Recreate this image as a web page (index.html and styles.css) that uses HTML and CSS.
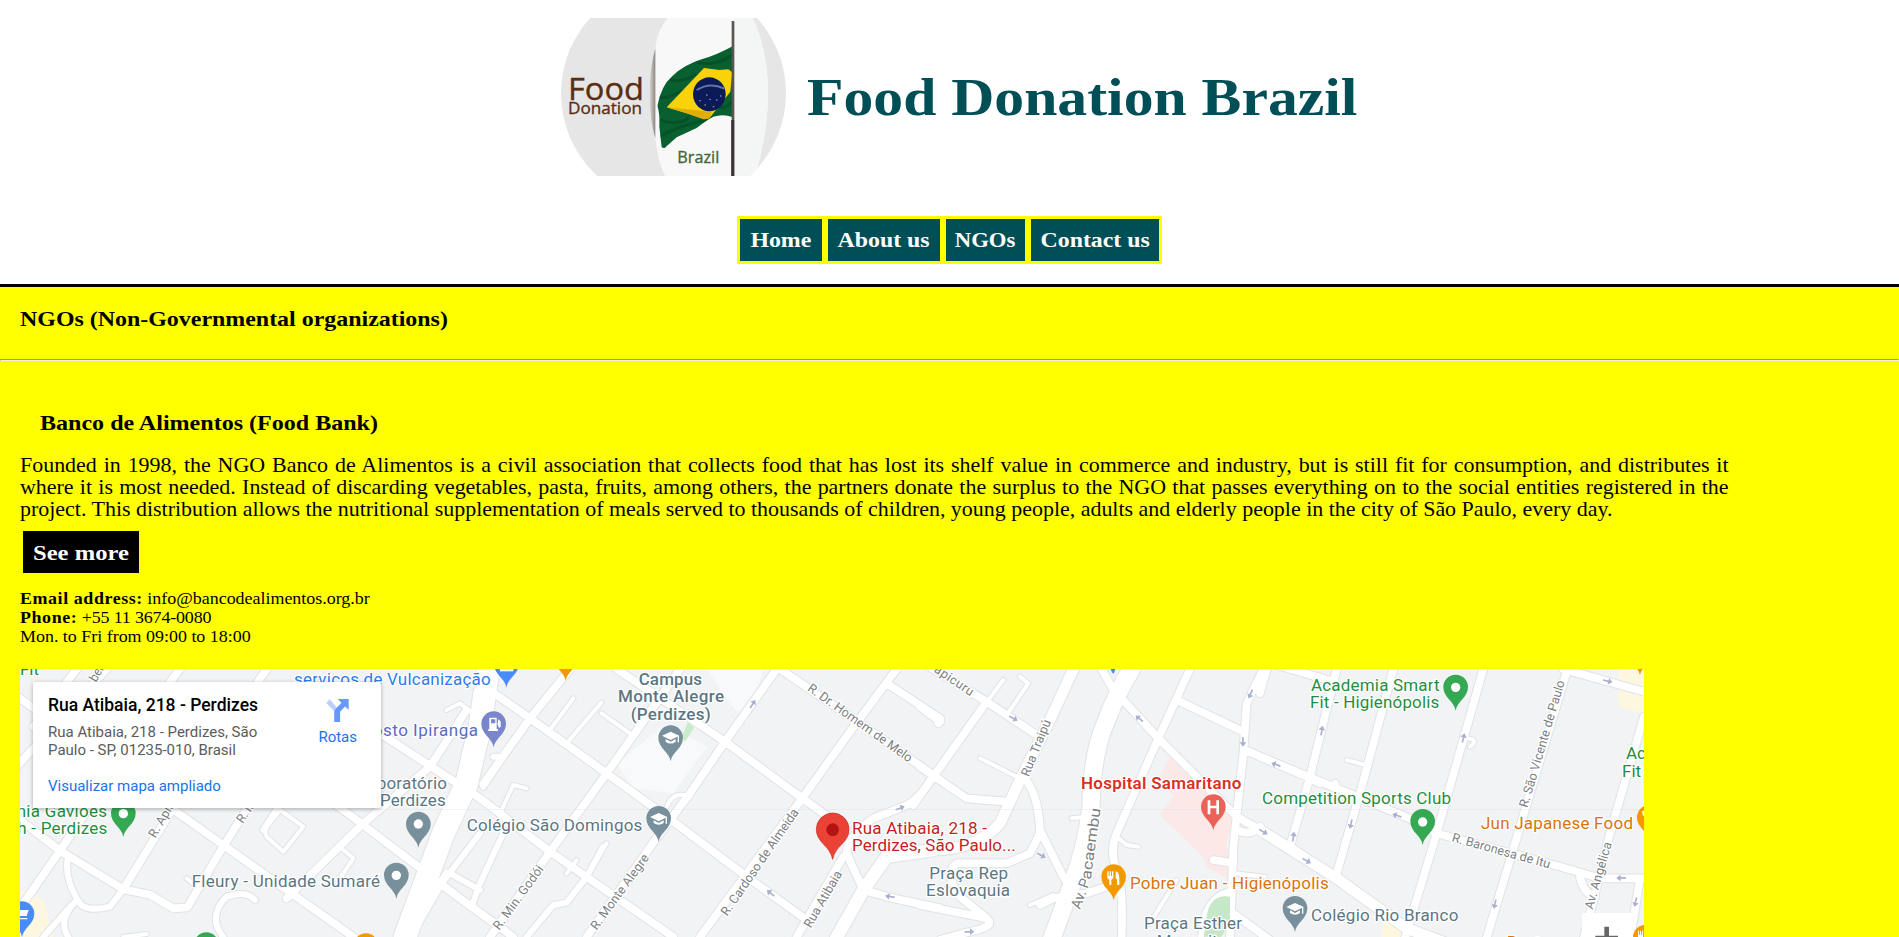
FILE: index.html
```html
<!DOCTYPE html>
<html lang="en">
<head>
<meta charset="utf-8">
<title>Food Donation Brazil</title>
<link rel="stylesheet" href="styles.css">
</head>
<body>
<header class="header">
  <div class="brand">
    <svg class="logo" viewBox="33 24 675 474" preserveAspectRatio="none">
      <defs>
        <clipPath id="disc"><ellipse cx="370.500" cy="250" rx="337.500" ry="337"/></clipPath>
        <clipPath id="flagshape"><path d="M549 108Q500 135 455 148Q400 165 365 200Q335 225 322 287Q330 310 328 350L335 412L343 415L380 382L440 354Q470 330 490 320Q520 310 549 322Z"/></clipPath>
        <linearGradient id="edge" x1="0" x2="1"><stop offset="0" stop-color="#d8d6d3"/><stop offset="1" stop-color="#8d867e"/></linearGradient>
      </defs>
      <g clip-path="url(#disc)">
        <rect x="33" y="24" width="675" height="474" fill="#e6e6e6"/>
        <path d="M353 24Q322 60 316 115V385Q325 460 345 498H615Q654 370 654 250Q654 120 608 24Z" fill="#f8f8f8"/>
        <path d="M549 24H608Q654 120 654 250Q654 370 615 498H549Z" fill="#f4f5f5"/>
        <path d="M316 115V385Q299 330 299 250Q299 175 316 115Z" fill="url(#edge)"/>
        <g clip-path="url(#flagshape)">
          <rect x="320" y="100" width="232" height="320" fill="#086030"/>
          <path d="M440 155Q480 175 549 135M360 210Q400 220 440 190M325 260Q350 270 400 240M330 330Q390 350 420 320M330 380Q390 345 470 330M500 290Q530 300 549 270" fill="none" stroke="#04401f" stroke-width="9" opacity=".45"/>
          <path d="M350 292L462 174L508 180L535 178L547 187L541 245L520 272L478 325L462 328L410 310Z" fill="#f9d20a"/>
          <path d="M350 292L410 310L462 328L478 325L485 305Z" fill="#e0ae09"/>
          <ellipse cx="478" cy="253" rx="49" ry="51" fill="#0d1a58"/>
          <path d="M440 240Q480 215 523 236" fill="none" stroke="#6474a6" stroke-width="6"/>
          <path d="M450 272h1M465 285h1M480 268h1M500 270h1M490 290h1M512 258h1M470 255h1" stroke="#8f9cc0" stroke-width="4" stroke-linecap="round"/>
        </g>
        <path d="M549 33V498" stroke="#5c5450" stroke-width="8"/>
        <path d="M548 330V498" stroke="#393434" stroke-width="9"/>
      </g>
      <g class="logo-text">
        <text x="54" y="271" font-size="95" textLength="228" lengthAdjust="spacingAndGlyphs" fill="#5b2d13">Food</text>
        <text x="54" y="311" font-size="50" textLength="222" lengthAdjust="spacingAndGlyphs" fill="#5b2d13">Donation</text>
        <text x="382" y="459" font-size="50" textLength="126" lengthAdjust="spacingAndGlyphs" fill="#42683c">Brazil</text>
      </g>
    </svg>
    <h1 class="title">Food Donation Brazil</h1>
  </div>
  <nav class="nav">
    <a class="nav-link nav-home"><span class="wide">Home</span></a>
    <a class="nav-link nav-about"><span class="wide">About us</span></a>
    <a class="nav-link nav-ngos"><span class="wide narrower">NGOs</span></a>
    <a class="nav-link nav-contact"><span class="wide">Contact us</span></a>
  </nav>
</header>
<main>
  <h2 class="page-heading">NGOs (Non-Governmental organizations)</h2>
  <hr class="rule">
  <section class="ngo">
    <h3 class="ngo-name">Banco de Alimentos (Food Bank)</h3>
    <p class="about">Founded in 1998, the NGO Banco de Alimentos is a civil association that collects food that has lost its shelf value in commerce and industry, but is still fit for consumption, and distributes it where it is most needed. Instead of discarding vegetables, pasta, fruits, among others, the partners donate the surplus to the NGO that passes everything on to the social entities registered in the project. This distribution allows the nutritional supplementation of meals served to thousands of children, young people, adults and elderly people in the city of São Paulo, every day.</p>
    <a class="more"><span class="wide">See more</span></a>
    <address class="contact">
      <div><b>Email address:</b> info@bancodealimentos.org.br</div>
      <div><b>Phone:</b> <span class="phone">+55 11 3674-0080</span></div>
      <div>Mon. to Fri from 09:00 to 18:00</div>
    </address>
    <div class="map">
      <svg class="map-art" viewBox="60 27 4872 804">
        <defs>
          <path id="pin" d="M0 71C-4 42 -37 32 -37 0A37 37 0 0 1 37 0C37 32 4 42 0 71Z"/>
          <g id="cap"><path d="M-26 -5L0 -17L26 -5L0 8Z"/><path d="M-15 5L0 13L15 5V13Q0 24 -15 13ZM21 -4h4V15h-4Z"/></g>
          <path id="arrow" d="M-14 -2H2V-10L15 0L2 10V3H-14Z"/>
          <g id="roads">
            <g>
              <path class="w24" d="M60 115L500 435L740 605L960 760L1060 831M60 480L180 572L370 688L450 704L520 745L562 742L660 575L770 400M60 745L180 572L300 395M370 688L540 410L800 27M100 200L230 27M40 330L320 27M500 80L540 27M860 330L1050 465L1380 715L1540 831M1140 220L1440 415L1650 575L2020 831M860 715L1090 490L1290 320L1400 150M1340 640L1230 831"/>
              <path class="w20" d="M205 585Q190 650 232 718Q170 780 205 831M232 718Q250 760 330 740L370 688M670 831Q620 770 680 710Q740 690 765 720M130 831L215 735M790 510L860 400M1440 690L1350 640M1310 690L1440 520"/>
              <path class="w12" d="M800 530Q790 510 805 495L840 450L910 500L850 575L800 530M1030 570L1060 595L1020 655M560 655L590 680M1340 150L1380 130L1440 180M370 831L440 822"/>
              <path class="w75" d="M1465 27L1440 200L1400 370L1330 520L1215 831"/>
            </g>
            <g transform="translate(1380)">
              <path class="w24" d="M60 70L210 175L440 340L640 485L860 650L1040 780M330 27L210 175L70 372M660 27L440 340L270 575L90 831M950 27L795 245L690 400L600 520L380 831M1310 27L1170 215L1030 410L720 831M470 27L795 245L1020 410L1160 510M960 27L1200 190L1440 360M1280 70L1440 175L1435 190M1420 345Q1380 420 1330 440L1240 475Q1160 530 1160 580L1210 690M1150 590L1010 831M1210 690L1300 715L1440 745"/>
              <path class="w40" d="M1120 850L1210 690L1280 590L1420 570"/>
              <path class="w20" d="M430 560L380 650L320 728L280 735L200 831M130 520L60 670L35 740M70 380L130 290L100 290"/>
              <path class="w12" d="M340 115L270 210M424 128L320 250M425 160L510 220M440 550L415 590M125 450L160 375L200 385M350 600L320 640M620 440Q640 390 690 410"/>
            </g>
            <g transform="translate(2760)">
              <path class="w24" d="M20 15L200 125L350 225M200 125L40 350L-20 435M0 320L140 415L260 425M0 140L60 185M810 27L715 235L590 520Q565 580 595 640Q610 700 605 831L600 850M600 110L715 235L860 380L950 470L1110 560L1200 620M545 27L580 90M770 120L970 215M1030 27L980 130L970 280L940 560L930 840M975 270L1160 350L1200 370M310 350Q355 400 360 510L430 650L460 690M360 520L330 580L260 610H110Q70 640 120 710L200 775M0 735L200 775Q230 800 150 815L60 840M360 735L400 715L500 700L560 680M940 760L1050 840M880 600L940 610M950 510Q990 530 1020 500"/>
              <path class="w34" d="M460 27L390 180L300 360L240 490Q180 560 60 570M850 850Q850 720 930 700"/>
              <path class="w55" d="M635 27Q590 100 560 180Q515 280 513 440Q500 560 450 690L390 850"/>
              <path class="w12" d="M260 165L325 70L300 50M205 120L250 60M180 295L290 350M590 530L620 555L655 560M330 735L400 705M455 475L500 470M690 790L770 660M940 640L1035 650"/>
            </g>
            <g transform="translate(3780)">
              <path class="w24" d="M0 0L220 65M230 27L150 350L90 560M0 290L145 350L460 480L530 520L900 620L1020 655H1152M400 27L300 400L230 640M670 27L530 520L430 850M920 35L750 600L675 850M910 27L1152 95M1152 170L1050 520L970 840M1140 655L1110 840M960 650Q970 700 1005 710M0 100L20 27"/>
              <path class="w34" d="M0 510L230 655L440 805L560 850"/>
              <path class="w12" d="M260 300L310 313M620 235Q660 240 630 260M215 375Q235 350 230 385"/>
            </g>
          </g>
        </defs>
        <rect x="60" y="27" width="4872" height="804" fill="#f1f3f4"/>
        <path d="M2120 27H2290L2240 190L2190 130ZM1850 310L2000 190L2120 260L2020 400L1900 385Z" fill="#f8f9fb"/>
        <path d="M2045 230L2065 185L2082 203L2055 245Z" fill="#c8ecca"/>
        <path d="M60 690L130 720L160 831H60ZM4855 27H4932V160L4855 140ZM4150 780L4230 800V831H4145Z" fill="#fef7e0"/>
        <path d="M3510 290L3700 470L3680 550L3690 660L3620 620L3610 590L3480 465L3520 410L3480 355Z" fill="#fce8e6"/>
        <use href="#roads" class="casing"/>
        <use href="#roads" class="surface"/>
        <path d="M3690 710Q3630 700 3620 770L3610 840H3660L3690 780Z" fill="#c5e8c8"/>
        <path d="M60 448H4932" stroke="#dadce0" stroke-width="2" opacity=".6"/>
        <g fill="#a9b0d0">
          <use href="#arrow" transform="translate(2258 132) rotate(-55)"/><use href="#arrow" transform="translate(2700 444) rotate(-20)"/><use href="#arrow" transform="translate(2312 700) rotate(-140)"/><use href="#arrow" transform="translate(2670 710) rotate(190)"/>
          <use href="#arrow" transform="translate(3040 175) rotate(30)"/><use href="#arrow" transform="translate(3418 176) rotate(220)"/><use href="#arrow" transform="translate(3752 102) rotate(115)"/><use href="#arrow" transform="translate(3729 245) rotate(90)"/><use href="#arrow" transform="translate(3828 314) rotate(200)"/><use href="#arrow" transform="translate(3790 515) rotate(30)"/><use href="#arrow" transform="translate(3880 530) rotate(-80)"/><use href="#arrow" transform="translate(3920 602) rotate(30)"/><use href="#arrow" transform="translate(3124 586) rotate(30)"/><use href="#arrow" transform="translate(2908 815) rotate(0)"/>
          <use href="#arrow" transform="translate(3965 212) rotate(-80)"/><use href="#arrow" transform="translate(4390 234) rotate(-75)"/><use href="#arrow" transform="translate(4053 492) rotate(105)"/><use href="#arrow" transform="translate(4191 467) rotate(200)"/><use href="#arrow" transform="translate(4823 63) rotate(15)"/><use href="#arrow" transform="translate(4864 654) rotate(180)"/><use href="#arrow" transform="translate(4485 732) rotate(105)"/><use href="#arrow" transform="translate(4907 726) rotate(105)"/>
        </g>
        <g class="street">
          <text transform="translate(288 68) rotate(-60)" textLength="52">ber</text>
          <text transform="translate(466 536) rotate(-60)" textLength="120">R. Apia</text>
          <text transform="translate(728 492) rotate(-56)" textLength="62">R. It</text>
          <text transform="translate(1498 812) rotate(-54)" textLength="228">R. Min. Godói</text>
          <text transform="translate(1790 812) rotate(-54)" textLength="270">R. Monte Alegre</text>
          <text transform="translate(2182 770) rotate(-55.500)" textLength="380">R. Cardoso de Almeida</text>
          <text transform="translate(2432 806) rotate(-60)" textLength="190">Rua Atibaia</text>
          <text transform="translate(2420 90) rotate(35.500)" textLength="376">R. Dr. Homem de Melo</text>
          <text transform="translate(2800 34) rotate(34)" textLength="134">apicuru</text>
          <text transform="translate(3086 352) rotate(-68)" textLength="180">Rua Traipú</text>
          <text class="avenue" transform="translate(3240 750) rotate(-70)" textLength="94">Av. P</text>
          <text class="avenue" transform="translate(3272 660) rotate(-82)" textLength="216" lengthAdjust="spacingAndGlyphs">acaembu</text>
          <text transform="translate(4582 445) rotate(-73.500)" textLength="396">R. São Vicente de Paulo</text>
          <text transform="translate(4354 544) rotate(15.500)" textLength="304">R. Baronesa de Itu</text>
          <text transform="translate(4778 750) rotate(-74)" textLength="208">Av. Angélica</text>
        </g>
        <g class="place">
          <text x="60" y="46" class="green" textLength="57">Fit</text>
          <text x="882" y="74" class="blue" textLength="590">serviços de Vulcanização</text>
          <text x="1118" y="229" class="violet" textLength="316">osto Ipiranga</text>
          <text x="1130" y="387" textLength="211">boratório</text>
          <text x="1140" y="438" textLength="197">Perdizes</text>
          <text x="50" y="472" class="green" textLength="271">nia Gaviões</text>
          <text x="52" y="523" class="green" textLength="270">h - Perdizes</text>
          <text x="575" y="682" textLength="565">Fleury - Unidade Sumaré</text>
          <text x="1400" y="512" textLength="527">Colégio São Domingos</text>
          <g class="bold"><text x="1916" y="75" textLength="190">Campus</text><text x="1854" y="127" textLength="318">Monte Alegre</text><text x="1892" y="180" textLength="240">(Perdizes)</text></g>
          <text x="2556" y="522" class="red" textLength="405">Rua Atibaia, 218 -</text>
          <text x="2556" y="574" class="red" textLength="491">Perdizes, São Paulo...</text>
          <text x="2788" y="656" textLength="236">Praça Rep</text><text x="2778" y="709" textLength="252">Eslovaquia</text>
          <text x="3243" y="386" class="hospital" textLength="481">Hospital Samaritano</text>
          <text x="3390" y="688" class="orange" textLength="596">Pobre Juan - Higienópolis</text>
          <text x="3432" y="808" textLength="294">Praça Esther</text><text x="3470" y="860" textLength="210">Mesquita</text>
          <text x="3933" y="92" class="green" textLength="386">Academia Smart</text><text x="3930" y="144" class="green" textLength="388">Fit - Higienópolis</text>
          <text x="3786" y="431" class="green" textLength="567">Competition Sports Club</text>
          <text x="3933" y="782" textLength="442">Colégio Rio Branco</text>
          <text x="4443" y="506" class="orange" textLength="456">Jun Japanese Food</text>
          <text x="4878" y="297" class="green">Academia</text><text x="4866" y="350" class="green">Fit -</text>
          <text x="4520" y="864" class="orange">Restaurante</text>
        </g>
        <g class="pins">
          <use href="#pin" x="370" y="460" fill="#34a853"/><circle cx="370" cy="461" r="14"/>
          <use href="#pin" x="1255" y="492" fill="#78909c"/><circle cx="1255" cy="492" r="14"/>
          <use href="#pin" x="1189" y="645" fill="#78909c"/><circle cx="1189" cy="646" r="14"/>
          <use href="#pin" x="66" y="761" fill="#4a8cf7"/><path d="M54 750H86L80 768H60ZM60 774H82V778H60Z"/>
          <use href="#pin" x="619" y="854" fill="#34a853"/><use href="#pin" x="1098" y="857" fill="#f29900"/>
          <use href="#pin" x="1519" y="12" fill="#4a8cf7"/><path d="M1500 27H1540V34H1500Z"/>
          <use href="#pin" x="1697" y="-8" fill="#f29900"/>
          <use href="#pin" x="1481" y="191" fill="#7986cb"/><path d="M1468 173H1490V207H1494V213H1465V207H1468ZM1473 178V190H1486V178ZM1494 178L1502 184V200Q1496 208 1494 196L1491 190H1494Z" fill-rule="evenodd"/>
          <use href="#pin" x="2012" y="233" fill="#78909c"/><use href="#cap" x="2012" y="232"/>
          <use href="#pin" x="1976" y="475" fill="#78909c"/><use href="#cap" x="1976" y="476"/>
          <path d="M2498 598C2490 556 2449 548 2449 508A49 49 0 0 1 2547 508C2547 548 2506 556 2498 598Z" fill="#ea4335" stroke="#c5221f" stroke-width="2"/><circle cx="2498" cy="509" r="19" fill="#b31412"/>
          <use href="#pin" x="3640" y="440" fill="#ec6259"/><path d="M3623 421h8v16h18v-16h8v42h-8v-18h-18v18h-8Z"/>
          <use href="#pin" x="3341" y="650" fill="#f29900"/><path d="M3322 634h4v14h3v-14h4v14h3v-14h4v20l-6 6v15h-6v-15l-6-6ZM3347 634q11 3 11 20v21h-7v-18h-4Z"/>
          <use href="#pin" x="3885" y="745" fill="#78909c"/><use href="#cap" x="3885" y="746"/>
          <use href="#pin" x="4367" y="81" fill="#34a853"/><circle cx="4367" cy="82" r="14"/>
          <use href="#pin" x="4268" y="484" fill="#34a853"/><circle cx="4268" cy="486" r="14"/>
          <use href="#pin" x="4948" y="472" fill="#f29900"/><path d="M4926 453h6v14h-3Z"/>
          <use href="#pin" x="4920" y="-24" fill="#f29900"/>
          <use href="#pin" x="4936" y="832" fill="#f29900"/><path d="M4914 812h3v12h3v-12h3v12h3v-12h3v20h-15Z"/>
          <path d="M3332 27h14q-2 10 -6 15q-5 -5 -8 -15Z" fill="#4a8cf7"/>
        </g>
        <rect x="4746" y="759" width="150" height="100" rx="6" fill="#fff"/>
        <path d="M4813 800h14v27h27v14h-68v-14h27Z" fill="#666"/>
      </svg>
      <div class="card">
        <div class="card-text">
          <div class="card-title">Rua Atibaia, 218 - Perdizes</div>
          <div class="card-address">Rua Atibaia, 218 - Perdizes, São<br>Paulo - SP, 01235-010, Brasil</div>
          <a class="card-link">Visualizar mapa ampliado</a>
        </div>
        <div class="directions">
          <svg class="directions-icon" viewBox="0 0 68 70"><path d="M0 12L10 1L34 28L27 40Z" fill="#b9d0fd"/><path d="M35 0H68V33L57 23L42 39V70H24V42Q24 34 29 29L46 12Z" fill="#6798fb"/></svg>
          <span>Rotas</span>
        </div>
      </div>
    </div>
  </section>
</main>
</body>
</html>
```
FILE: styles.css
```css
* { box-sizing: border-box; }
body {
  margin: 0;
  height: 937px;
  overflow: hidden;
  background: #ff0;
  color: #000;
  font-family: "Liberation Serif", serif;
}
h1, h2, h3, p { margin: 0; }
.wide { display: inline-block; transform: scaleX(1.135); }
.narrower { transform: scaleX(1.08); }
.header {
  height: 287px;
  padding-top: 18px;
  background: #fff;
  border-bottom: 3px solid #000;
}
.brand {
  display: flex;
  align-items: center;
  height: 158px;
  padding-left: 561px;
  gap: 21px;
}
.logo { width: 225px; height: 158px; }
.logo-text { font-family: "Open Sans", sans-serif; stroke-width: 1px; stroke: #5b2d13; }
.logo-text text:last-child { stroke: #42683c; }
.title {
  font-size: 53px;
  line-height: 60px;
  color: #004f56;
  white-space: nowrap;
  transform: scaleX(1.126);
  transform-origin: left;
}
.nav {
  display: flex;
  width: 425px;
  margin: 40px 0 0 737px;
}
.nav-link {
  height: 48px;
  border: 3px solid #ff0;
  background: #004f56;
  color: #fff;
  font-size: 21px;
  font-weight: bold;
  line-height: 43px;
  text-align: center;
  white-space: nowrap;
}
.nav-home { width: 88px; }
.nav-about { width: 118px; }
.nav-ngos { width: 85px; }
.nav-contact { width: 134px; }
.page-heading {
  width: 460px;
  height: 72px;
  margin-left: 20px;
  padding-top: 20px;
  font-size: 21px;
  line-height: 24px;
  white-space: nowrap;
  transform: scaleX(1.139);
  transform-origin: left;
}
.rule { margin: 0; }
.ngo { padding: 50px 20px 0; }
.ngo-name {
  width: 400px;
  margin-left: 20px;
  font-size: 21px;
  line-height: 24px;
  transform: scaleX(1.145);
  transform-origin: left;
}
.about {
  width: 1635px;
  margin-top: 19px;
  font-size: 21px;
  line-height: 22px;
  text-align: justify;
  transform: scaleX(1.045);
  transform-origin: left;
}
.more {
  display: block;
  width: 116px;
  height: 42px;
  margin: 11px 0 0 3px;
  background: #000;
  color: #fff;
  font-size: 21px;
  font-weight: bold;
  line-height: 44px;
  text-align: center;
}
.more .wide { transform: scaleX(1.17); }
.contact {
  width: 500px;
  height: 61px;
  margin: 16px 0 19px;
  font-size: 17px;
  font-style: normal;
  line-height: 19px;
  transform: scaleX(1.055);
  transform-origin: left;
}
.contact b { letter-spacing: .55px; }
.phone { letter-spacing: -.15px; }
.map {
  position: relative;
  width: 1624px;
  height: 268px;
  overflow: hidden;
  font-family: Roboto, sans-serif;
}
.map-art { display: block; width: 1624px; height: 268px; }
#roads path { fill: none; stroke-linecap: round; stroke-linejoin: round; }
.casing { --edge: 6px; stroke: #e0e2e7; }
.surface { --edge: 0px; stroke: #fff; }
.w12 { stroke-width: calc(12px + var(--edge)); }
.w20 { stroke-width: calc(18px + var(--edge)); }
.w24 { stroke-width: calc(23px + var(--edge)); }
.w34 { stroke-width: calc(32px + var(--edge)); }
.w40 { stroke-width: calc(38px + var(--edge)); }
.w55 { stroke-width: calc(52px + var(--edge)); }
.w75 { stroke-width: calc(68px + var(--edge)); }
.street text, .place text { paint-order: stroke; stroke: #fff; stroke-width: 8px; stroke-linejoin: round; }
.street { font-size: 38px; fill: #7c8084; }
.street .avenue { font-size: 44px; }
.place { font-size: 51px; fill: #5b7683; }
.place .bold { font-weight: 500; }
.place .green { fill: #1e8e3e; }
.place .blue { fill: #2f7bea; }
.place .violet { fill: #5c6bc0; }
.place .red { fill: #c5221f; }
.place .orange { fill: #d9730d; }
.place .hospital { fill: #d93025; font-weight: 600; }
.pins { fill: #fff; }
.card {
  position: absolute;
  left: 13px;
  top: 13px;
  display: flex;
  width: 348px;
  height: 126px;
  padding: 13px 24px 0 15px;
  justify-content: space-between;
  background: #fff;
  border-radius: 2px;
  box-shadow: 0 1px 4px rgba(0, 0, 0, .3);
}
.card-title { font-size: 17.5px; font-weight: 500; line-height: 20px; white-space: nowrap; }
.card-address { margin-top: 8px; color: #5b5b5b; font-size: 15px; line-height: 18px; white-space: nowrap; }
.card-link { display: block; margin-top: 18px; color: #1a73e8; font-size: 15px; line-height: 18px; }
.directions { display: flex; flex-direction: column; align-items: center; color: #1a73e8; font-size: 15px; padding-top: 4px; }
.directions-icon { width: 23px; height: 23px; margin-bottom: 6px; }
```
